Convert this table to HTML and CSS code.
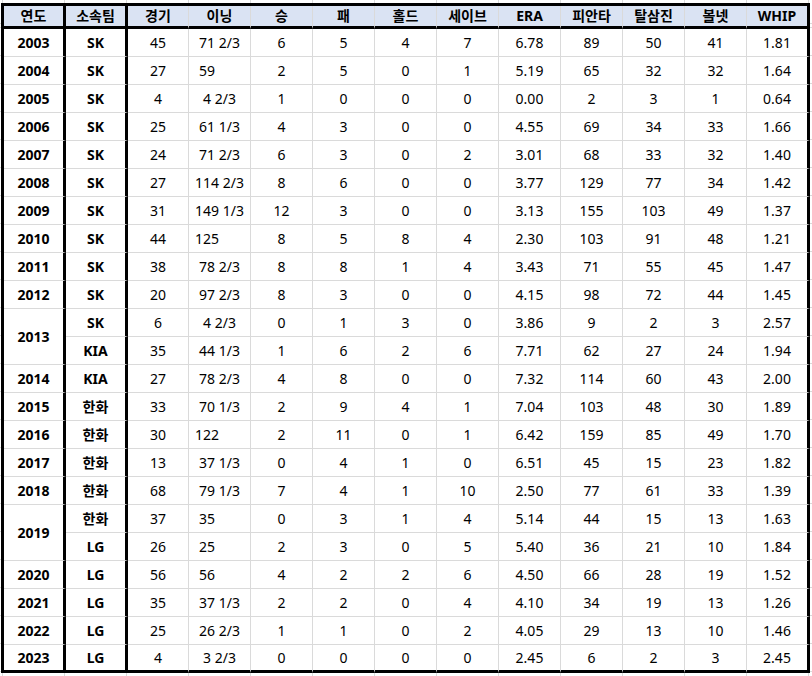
FILE: index.html
```html
<!DOCTYPE html>
<html lang="ko">
<head>
<meta charset="utf-8">
<title>투수 기록</title>
<link rel="stylesheet" href="styles.css">
</head>
<body>
<table class="sheet">
<thead>
<tr class="head">
<th class="y">연도</th><th class="t">소속팀</th><th class="n3">경기</th><th>이닝</th><th>승</th><th>패</th><th>홀드</th><th>세이브</th><th>ERA</th><th>피안타</th><th>탈삼진</th><th>볼넷</th><th class="w">WHIP</th>
</tr>
</thead>
<tbody>
<tr><td class="y">2003</td><td class="t">SK</td><td>45</td><td>71 2/3</td><td>6</td><td>5</td><td>4</td><td>7</td><td>6.78</td><td>89</td><td>50</td><td>41</td><td class="w">1.81</td></tr>
<tr><td class="y">2004</td><td class="t">SK</td><td>27</td><td>59<span class="pad"> 2/3</span></td><td>2</td><td>5</td><td>0</td><td>1</td><td>5.19</td><td>65</td><td>32</td><td>32</td><td class="w">1.64</td></tr>
<tr><td class="y">2005</td><td class="t">SK</td><td>4</td><td>4 2/3</td><td>1</td><td>0</td><td>0</td><td>0</td><td>0.00</td><td>2</td><td>3</td><td>1</td><td class="w">0.64</td></tr>
<tr><td class="y">2006</td><td class="t">SK</td><td>25</td><td>61 1/3</td><td>4</td><td>3</td><td>0</td><td>0</td><td>4.55</td><td>69</td><td>34</td><td>33</td><td class="w">1.66</td></tr>
<tr><td class="y">2007</td><td class="t">SK</td><td>24</td><td>71 2/3</td><td>6</td><td>3</td><td>0</td><td>2</td><td>3.01</td><td>68</td><td>33</td><td>32</td><td class="w">1.40</td></tr>
<tr><td class="y">2008</td><td class="t">SK</td><td>27</td><td>114 2/3</td><td>8</td><td>6</td><td>0</td><td>0</td><td>3.77</td><td>129</td><td>77</td><td>34</td><td class="w">1.42</td></tr>
<tr><td class="y">2009</td><td class="t">SK</td><td>31</td><td>149 1/3</td><td>12</td><td>3</td><td>0</td><td>0</td><td>3.13</td><td>155</td><td>103</td><td>49</td><td class="w">1.37</td></tr>
<tr><td class="y">2010</td><td class="t">SK</td><td>44</td><td>125<span class="pad"> 2/3</span></td><td>8</td><td>5</td><td>8</td><td>4</td><td>2.30</td><td>103</td><td>91</td><td>48</td><td class="w">1.21</td></tr>
<tr><td class="y">2011</td><td class="t">SK</td><td>38</td><td>78 2/3</td><td>8</td><td>8</td><td>1</td><td>4</td><td>3.43</td><td>71</td><td>55</td><td>45</td><td class="w">1.47</td></tr>
<tr><td class="y">2012</td><td class="t">SK</td><td>20</td><td>97 2/3</td><td>8</td><td>3</td><td>0</td><td>0</td><td>4.15</td><td>98</td><td>72</td><td>44</td><td class="w">1.45</td></tr>
<tr><td class="y" rowspan="2">2013</td><td class="t">SK</td><td>6</td><td>4 2/3</td><td>0</td><td>1</td><td>3</td><td>0</td><td>3.86</td><td>9</td><td>2</td><td>3</td><td class="w">2.57</td></tr>
<tr><td class="t">KIA</td><td>35</td><td>44 1/3</td><td>1</td><td>6</td><td>2</td><td>6</td><td>7.71</td><td>62</td><td>27</td><td>24</td><td class="w">1.94</td></tr>
<tr><td class="y">2014</td><td class="t">KIA</td><td>27</td><td>78 2/3</td><td>4</td><td>8</td><td>0</td><td>0</td><td>7.32</td><td>114</td><td>60</td><td>43</td><td class="w">2.00</td></tr>
<tr><td class="y">2015</td><td class="t">한화</td><td>33</td><td>70 1/3</td><td>2</td><td>9</td><td>4</td><td>1</td><td>7.04</td><td>103</td><td>48</td><td>30</td><td class="w">1.89</td></tr>
<tr><td class="y">2016</td><td class="t">한화</td><td>30</td><td>122<span class="pad"> 2/3</span></td><td>2</td><td>11</td><td>0</td><td>1</td><td>6.42</td><td>159</td><td>85</td><td>49</td><td class="w">1.70</td></tr>
<tr><td class="y">2017</td><td class="t">한화</td><td>13</td><td>37 1/3</td><td>0</td><td>4</td><td>1</td><td>0</td><td>6.51</td><td>45</td><td>15</td><td>23</td><td class="w">1.82</td></tr>
<tr><td class="y">2018</td><td class="t">한화</td><td>68</td><td>79 1/3</td><td>7</td><td>4</td><td>1</td><td>10</td><td>2.50</td><td>77</td><td>61</td><td>33</td><td class="w">1.39</td></tr>
<tr><td class="y" rowspan="2">2019</td><td class="t">한화</td><td>37</td><td>35<span class="pad"> 2/3</span></td><td>0</td><td>3</td><td>1</td><td>4</td><td>5.14</td><td>44</td><td>15</td><td>13</td><td class="w">1.63</td></tr>
<tr><td class="t">LG</td><td>26</td><td>25<span class="pad"> 2/3</span></td><td>2</td><td>3</td><td>0</td><td>5</td><td>5.40</td><td>36</td><td>21</td><td>10</td><td class="w">1.84</td></tr>
<tr><td class="y">2020</td><td class="t">LG</td><td>56</td><td>56<span class="pad"> 2/3</span></td><td>4</td><td>2</td><td>2</td><td>6</td><td>4.50</td><td>66</td><td>28</td><td>19</td><td class="w">1.52</td></tr>
<tr><td class="y">2021</td><td class="t">LG</td><td>35</td><td>37 1/3</td><td>2</td><td>2</td><td>0</td><td>4</td><td>4.10</td><td>34</td><td>19</td><td>13</td><td class="w">1.26</td></tr>
<tr><td class="y">2022</td><td class="t">LG</td><td>25</td><td>26 2/3</td><td>1</td><td>1</td><td>0</td><td>2</td><td>4.05</td><td>29</td><td>13</td><td>10</td><td class="w">1.46</td></tr>
<tr class="last"><td class="y">2023</td><td class="t">LG</td><td>4</td><td>3 2/3</td><td>0</td><td>0</td><td>0</td><td>0</td><td>2.45</td><td>6</td><td>2</td><td>3</td><td class="w">2.45</td></tr>
</tbody>
</table>
</body>
</html>
```
FILE: styles.css
```css
html, body {
  margin: 0;
  padding: 0;
}
body {
  width: 812px;
  height: 676px;
  overflow: hidden;
  background-color: #fff;
  background-image:
    repeating-linear-gradient(to right, #dadada 0 1px, transparent 1px 62px),
    repeating-linear-gradient(to bottom, #dadada 0 1px, transparent 1px 28px);
  background-position: 2px 0, 0 27px;
  font-family: "Noto Sans", "Noto Sans CJK KR", sans-serif;
  font-size: 14px;
  color: #000;
}
.sheet {
  margin: 3px 0 0 1px;
  width: 809px;
  table-layout: fixed;
  border-collapse: separate;
  border-spacing: 0;
  border-left: 3px solid #000;
  border-top: 3px solid #000;
  background: #fff;
}
.sheet th,
.sheet td {
  box-sizing: border-box;
  padding: 0;
  text-align: center;
  vertical-align: middle;
  white-space: pre;
  line-height: 18px;
  border-right: 1px solid #dadada;
  border-bottom: 1px solid #dadada;
}
.sheet th {
  width: 62px;
  height: 23px;
  background: #dae3f3;
  font-weight: bold;
  border-bottom: 3px solid #000;
  padding-bottom: 1px;
}
.sheet td {
  height: 28px;
  font-weight: normal;
}
.sheet th.n3 {
  width: 61px;
}
.sheet .y,
.sheet .t {
  border-right: 3px solid #000;
  font-weight: bold;
}
.sheet th.w {
  width: 63px;
}
.sheet .w {
  border-right: 3px solid #000;
}
.sheet tr.last td {
  border-bottom: 3px solid #000;
}
.pad {
  visibility: hidden;
}
```
